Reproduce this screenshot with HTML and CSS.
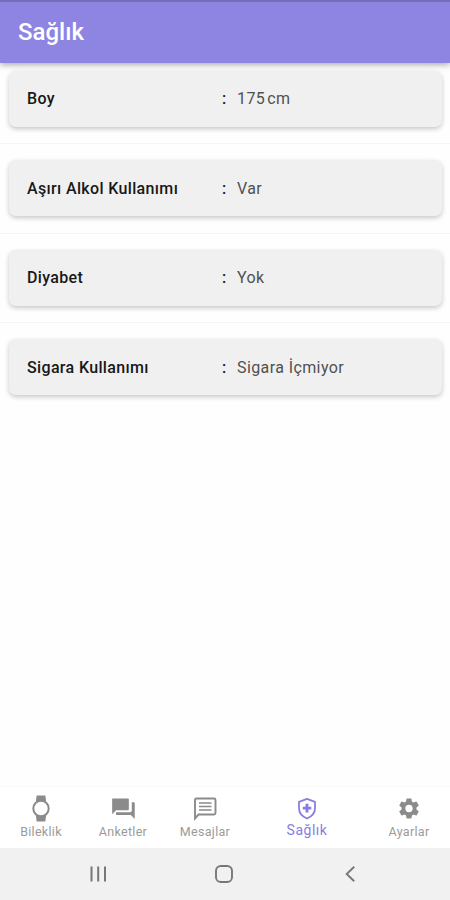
FILE: index.html
```html
<!DOCTYPE html>
<html lang="tr">
<head>
<meta charset="utf-8">
<title>Sağlık</title>
<link rel="stylesheet" href="styles.css">
</head>
<body>
<header class="header"><h1 class="title">Sağlık</h1></header>
<main class="list">
  <section class="row"><div class="card"><span class="label">Boy</span><span class="colon">:</span><span class="value">175<span class="unit">cm</span></span></div></section>
  <section class="row"><div class="card"><span class="label">Aşırı Alkol Kullanımı</span><span class="colon">:</span><span class="value">Var</span></div></section>
  <section class="row"><div class="card"><span class="label">Diyabet</span><span class="colon">:</span><span class="value">Yok</span></div></section>
  <section class="row"><div class="card"><span class="label">Sigara Kullanımı</span><span class="colon">:</span><span class="value">Sigara İçmiyor</span></div></section>
</main>
<nav class="tabs">
  <a class="tab">
    <svg class="icon" viewBox="0 0 26 28"><path d="M8.700 1.500h8.600l.9 6H7.800zM7.800 21h10.400l-.9 6.500H8.700z" fill="currentColor"/><circle cx="13" cy="14.500" r="7.700" fill="#fff" stroke="currentColor" stroke-width="2"/></svg>
    <span>Bileklik</span>
  </a>
  <a class="tab">
    <svg class="icon" viewBox="-1.200 -2.500 26.500 28.500"><path d="M21 6h2c.55 0 1 .45 1 1v16l-4-4H6c-.55 0-1-.45-1-1v-2h14c1 0 2-.5 2-1.500zM1 2h16c.55 0 1 .45 1 1v10c0 .55-.45 1-1 1H5l-4 4z" fill="currentColor"/></svg>
    <span>Anketler</span>
  </a>
  <a class="tab">
    <svg class="icon" viewBox="0 0 26 28"><path d="M3 24.500V6q0-1.500 1.500-1.500h17.500q1.500 0 1.500 1.500v13q0 1.500-1.500 1.500H6.500z" fill="none" stroke="currentColor" stroke-width="1.900"/><path d="M7 9h12.500M7 12.500h12.500M7 16h12.500" stroke="currentColor" stroke-width="1.700"/></svg>
    <span>Mesajlar</span>
  </a>
  <a class="tab active">
    <svg class="icon" viewBox="0 0 26 28"><path d="M13 4.800l8 3v6.200c0 5-3.200 8.500-8 10.500-4.800-2-8-5.500-8-10.500V7.800z" fill="none" stroke="currentColor" stroke-width="1.800" stroke-linejoin="round"/><path d="M13 9.800v8.600M8.700 14.100h8.600" stroke="currentColor" stroke-width="2.900"/></svg>
    <span>Sağlık</span>
  </a>
  <a class="tab">
    <svg class="icon" viewBox="-1 -2.500 26 28"><path fill="currentColor" d="M19.430 12.980c.04-.32.07-.64.07-.98s-.03-.66-.07-.98l2.110-1.650c.19-.15.24-.42.12-.64l-2-3.460c-.12-.22-.39-.3-.61-.22l-2.490 1c-.52-.4-1.080-.73-1.690-.98l-.38-2.650C14.460 2.180 14.250 2 14 2h-4c-.25 0-.46.18-.49.42l-.38 2.650c-.61.25-1.170.59-1.690.98l-2.490-1c-.23-.09-.49 0-.61.22l-2 3.460c-.13.22-.07.49.12.64l2.110 1.650c-.04.32-.07.65-.07.98s.03.66.07.98l-2.110 1.650c-.19.15-.24.42-.12.64l2 3.460c.12.22.39.3.61.22l2.490-1c.52.4 1.080.73 1.690.98l.38 2.650c.03.24.24.42.49.42h4c.25 0 .46-.18.49-.42l.38-2.650c.61-.25 1.170-.59 1.690-.98l2.490 1c.23.09.49 0 .61-.22l2-3.460c.12-.22.07-.49-.12-.64zM12 15.700a3.700 3.700 0 1 1 0-7.400 3.700 3.700 0 0 1 0 7.400z"/></svg>
    <span>Ayarlar</span>
  </a>
</nav>
<footer class="system">
  <svg class="key" viewBox="0 0 20 20"><path d="M3.500 2.500v15M10.200 2.500v15M17 2.500v15" stroke="currentColor" stroke-width="2"/></svg>
  <svg class="key" viewBox="0 0 20 20"><rect x="2" y="2" width="16" height="16" rx="4.800" fill="none" stroke="currentColor" stroke-width="1.900"/></svg>
  <svg class="key" viewBox="0 0 20 20"><path d="M14.200 2.800L6.700 10l7.500 7.200" fill="none" stroke="currentColor" stroke-width="1.900"/></svg>
</footer>
</body>
</html>
```
FILE: styles.css
```css
* { box-sizing: border-box; }
body {
  margin: 0;
  height: 900px;
  display: flex;
  flex-direction: column;
  background: #fefefe;
  font-family: Roboto, "Noto Sans", sans-serif;
  overflow: hidden;
}
.header {
  height: 63px;
  flex: none;
  display: flex;
  align-items: center;
  padding: 0 18px 2px;
  background: #8e84e1;
  border-top: 2px solid #766eb9;
  box-shadow: 0 2px 6px rgba(0, 0, 0, .32);
}
.title { margin: 0; color: #fff; font-size: 24px; line-height: 30px; font-weight: 500; }
.list { flex: 1; }
.row {
  height: 89.5px;
  padding: 16px 8px 0 9px;
  border-bottom: 1px solid #f4f4f4;
}
.row:first-child { height: 81px; padding-top: 7.5px; }
.row:last-child { border-bottom: 0; }
.card {
  height: 56px;
  display: flex;
  align-items: center;
  padding-left: 18px;
  border-radius: 7px;
  background: #f0f0f0;
  box-shadow: 0 2px 5px rgba(0, 0, 0, .22);
  font-size: 16px;
  color: #181818;
}
.label { width: 195px; font-weight: 500; letter-spacing: .35px; }
.colon { width: 15px; font-weight: 500; }
.value { color: #505050; letter-spacing: .4px; }
.unit { margin-left: 2px; }
.tabs {
  height: 62px;
  flex: none;
  display: grid;
  grid-template-columns: 82px 82px 82px 122px 82px;
  background: #fff;
  border-top: 1px solid #f8f8f8;
}
.tab {
  display: flex;
  flex-direction: column;
  align-items: center;
  padding-top: 7px;
  color: #8b8b8b;
  font-size: 12.500px;
  line-height: 19px;
  letter-spacing: .3px;
}
.tab span { color: #9b9b9b; }
.icon { width: 26px; height: 28px; flex: none; }
.active { color: #897de1; font-size: 14px; line-height: 17px; letter-spacing: .5px; }
.active span { color: inherit; }
.system {
  height: 52px;
  flex: none;
  display: flex;
  justify-content: space-between;
  align-items: center;
  padding: 0 90px 0 88px;
  background: #f1f1f1;
  color: #777;
}
.key { width: 20px; height: 20px; }
```
